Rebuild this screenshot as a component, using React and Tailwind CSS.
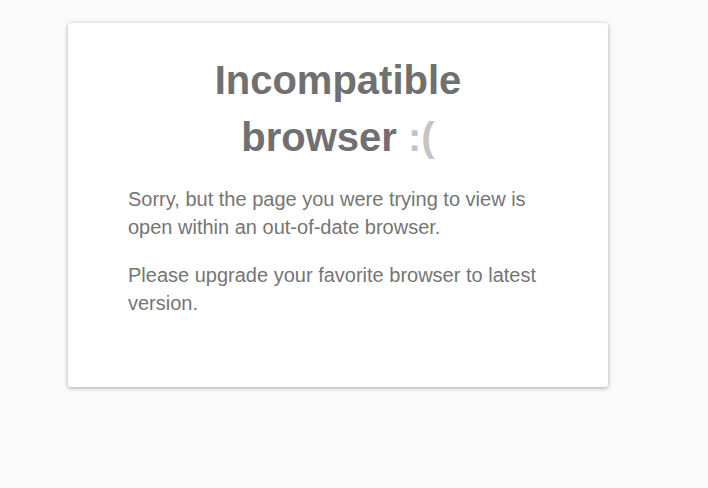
export default function App() {
  return (
    <div className="min-h-[488px] w-full bg-[#fafafa] pt-[23px] pl-[68px]" style={{ fontFamily: '"Liberation Sans", Arial, sans-serif' }}>
      <div className="w-[540px] rounded-[3px] bg-white px-[60px] pt-[29px] pb-[70px] shadow-[0_1px_4px_rgba(0,0,0,0.35)]">
        <h1 className="mx-auto w-[300px] text-center text-[40px] font-bold leading-[57px] text-[#707070]">
          Incompatible browser <span className="text-[#c4c4c4]">:(</span>
        </h1>
        <p className="mt-[19px] text-[20px] leading-[28px] text-[#757575]">
          Sorry, but the page you were trying to view is open within an out-of-date browser.
        </p>
        <p className="mt-[20px] text-[20px] leading-[28px] text-[#757575]">
          Please upgrade your favorite browser to latest version.
        </p>
      </div>
    </div>
  );
}
